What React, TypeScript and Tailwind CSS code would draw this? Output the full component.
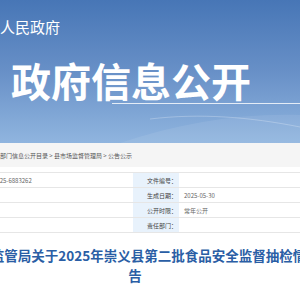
export default function App() {
  const rows = [
    { left: '0825-6883262', label: '文件编号：', value: '' },
    { left: '', label: '生成日期：', value: '2025-05-30' },
    { left: '', label: '公开时限：', value: '常年公开' },
    { left: '', label: '责任部门：', value: '' },
  ];

  return (
    <div className="w-[300px] h-[300px] overflow-hidden bg-white font-['Noto_Sans_CJK_SC','Noto_Sans',sans-serif]">
      <header className="relative h-[143px] overflow-hidden bg-gradient-to-b from-[#4776b6] via-[#6890c7] to-[#90b5df]">
        <svg className="absolute left-0 bottom-0" width="300" height="50" viewBox="0 0 300 50">
          <path d="M120 50 C180 30 240 20 300 22 L300 50 Z" fill="#ffffff" opacity="0.08" />
          <path d="M150 26 C200 20 250 24 300 34" stroke="#ffffff" strokeOpacity="0.25" fill="none" />
        </svg>
        <div className="relative pt-[19px]">
          <p className="ml-[-45px] whitespace-nowrap text-[15px] leading-[15px] text-white">崇义县人民政府</p>
          <h1 className="mt-[26px] ml-[11px] whitespace-nowrap text-[40px] leading-[40px] font-bold text-white">
            政府信息公开
          </h1>
          <div className="mt-[3px] ml-[112px] h-px bg-white/80" />
        </div>
      </header>

      <div className="flex h-[24px] items-center whitespace-nowrap bg-[#f5f5f5] text-[6px] text-[#555]">
        <span className="ml-[-12px]">县直部门信息公开目录 &gt; 县市场监督管理局 &gt; 公告公示</span>
      </div>

      <div className="mt-[5px] border-t border-[#e6e6e6]">
        {rows.map((r) => (
          <div key={r.label} className="flex h-[15px] border-b border-[#e6e6e6] text-[6px] text-[#666]">
            <div className="flex w-[133px] items-center whitespace-nowrap">
              <span className="ml-[-7px]">{r.left}</span>
            </div>
            <div className="flex w-[46px] items-center justify-end bg-[#e8f2fc] pr-[2px] text-[#444]">
              {r.label}
            </div>
            <div className="flex flex-1 items-center pl-[5px]">{r.value}</div>
          </div>
        ))}
      </div>

      <h2 className="mt-[12px] ml-[-77px] w-[424px] whitespace-nowrap text-center text-[13.5px] leading-[20px] font-bold text-[#2a5ea5]">
        崇义县市场监管局关于2025年崇义县第二批食品安全监督抽检情况的公
        <br />告
      </h2>
    </div>
  );
}
